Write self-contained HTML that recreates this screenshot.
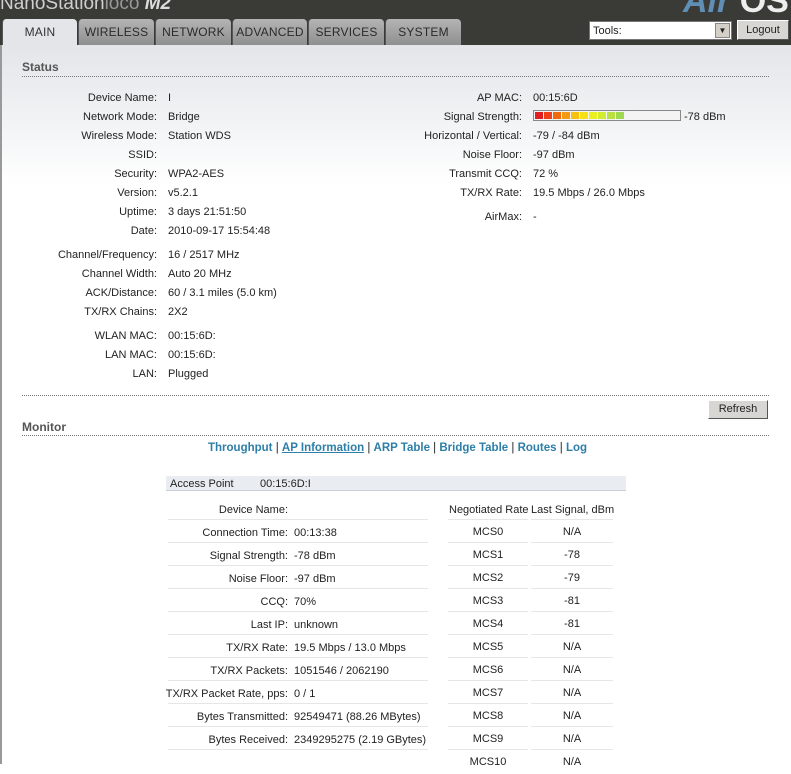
<!DOCTYPE html>
<html><head><meta charset="utf-8"><style>
*{margin:0;padding:0;box-sizing:border-box}
body{width:791px;height:764px;overflow:hidden;position:relative;font-family:"Liberation Sans",Arial,sans-serif;font-size:11px;color:#222;background:#fff}
.hdr{position:absolute;left:0;top:0;width:791px;height:45px;background:#3a3a37}
.main{position:absolute;left:0;top:45px;width:791px;height:719px;background:linear-gradient(#e3e5e9 0px,#eef0f2 60px,#fff 140px,#fff);border-left:2px solid #999}
.tab{position:absolute;top:19px;height:26px;background:linear-gradient(#b4b4b4,#8f8f8f);color:#2a2a2a;font-size:12px;text-align:center;line-height:27px;border-radius:4px 4px 0 0;letter-spacing:.2px;border-left:1px solid #555}
.tab.on{background:#e3e5e9;color:#333}
.a{position:absolute;white-space:nowrap;line-height:14px;margin-top:1px}
.l{text-align:right}
.sec{position:absolute;left:22px;font-weight:bold;font-size:12px;color:#555}
.dot{position:absolute;left:22px;width:747px;border-top:1px dotted #777}
.sep{position:absolute;height:1px;background:#e6e6e6}
.btn{position:absolute;background:#d8d6d2;border:1px solid #fff;border-right-color:#555;border-bottom-color:#555;font-size:11px;text-align:center}
a{color:#2d7ea8;font-weight:bold;text-decoration:none}
</style></head><body>
<div class="hdr"></div>
<div class="a" style="left:0;top:-7px;font-size:19px;color:#cfcfcf;line-height:20px">NanoStation<span style="color:#999">loco</span> <b style="font-style:italic;color:#ddd">M2</b></div>
<div class="a" style="left:683px;top:-15px;font-size:34px;line-height:30px;font-style:italic;color:#5f8fb5;font-weight:bold">Air <span style="color:#eee;font-style:normal">OS</span></div>
<div class="main"></div>
<div class="tab on" style="left:2px;width:75px">MAIN</div>
<div class="tab" style="left:78px;width:76px">WIRELESS</div>
<div class="tab" style="left:155px;width:76px">NETWORK</div>
<div class="tab" style="left:232px;width:75px">ADVANCED</div>
<div class="tab" style="left:308px;width:76px">SERVICES</div>
<div class="tab" style="left:385px;width:76px">SYSTEM</div>
<div style="position:absolute;left:589px;top:21px;width:143px;height:19px;background:#fff;border:1px solid #777"><span class="a" style="left:3px;top:1px">Tools:</span><div style="position:absolute;right:1px;top:1px;width:15px;height:15px;background:#d4d0c8;border:1px solid #888;font-size:8px;text-align:center;line-height:14px">▼</div></div>
<div class="btn" style="left:737px;top:20px;width:52px;height:20px;line-height:18px">Logout</div>

<div class="sec" style="top:60px">Status</div>
<div class="dot" style="top:76px"></div>

<div class="a l" style="left:20px;width:137px;top:90px">Device Name:</div><div class="a" style="left:168px;top:90px">I</div>
<div class="a l" style="left:20px;width:137px;top:109px">Network Mode:</div><div class="a" style="left:168px;top:109px">Bridge</div>
<div class="a l" style="left:20px;width:137px;top:128px">Wireless Mode:</div><div class="a" style="left:168px;top:128px">Station WDS</div>
<div class="a l" style="left:20px;width:137px;top:147px">SSID:</div>
<div class="a l" style="left:20px;width:137px;top:166px">Security:</div><div class="a" style="left:168px;top:166px">WPA2-AES</div>
<div class="a l" style="left:20px;width:137px;top:185px">Version:</div><div class="a" style="left:168px;top:185px">v5.2.1</div>
<div class="a l" style="left:20px;width:137px;top:204px">Uptime:</div><div class="a" style="left:168px;top:204px">3 days 21:51:50</div>
<div class="a l" style="left:20px;width:137px;top:223px">Date:</div><div class="a" style="left:168px;top:223px">2010-09-17 15:54:48</div>
<div class="a l" style="left:20px;width:137px;top:247px">Channel/Frequency:</div><div class="a" style="left:168px;top:247px">16 / 2517 MHz</div>
<div class="a l" style="left:20px;width:137px;top:266px">Channel Width:</div><div class="a" style="left:168px;top:266px">Auto 20 MHz</div>
<div class="a l" style="left:20px;width:137px;top:285px">ACK/Distance:</div><div class="a" style="left:168px;top:285px">60 / 3.1 miles (5.0 km)</div>
<div class="a l" style="left:20px;width:137px;top:304px">TX/RX Chains:</div><div class="a" style="left:168px;top:304px">2X2</div>
<div class="a l" style="left:20px;width:137px;top:328px">WLAN MAC:</div><div class="a" style="left:168px;top:328px">00:15:6D:</div>
<div class="a l" style="left:20px;width:137px;top:347px">LAN MAC:</div><div class="a" style="left:168px;top:347px">00:15:6D:</div>
<div class="a l" style="left:20px;width:137px;top:366px">LAN:</div><div class="a" style="left:168px;top:366px">Plugged</div>

<div class="a l" style="left:380px;width:142px;top:90px">AP MAC:</div><div class="a" style="left:533px;top:90px">00:15:6D</div>
<div class="a l" style="left:380px;width:142px;top:109px">Signal Strength:</div>
<div style="position:absolute;left:533px;top:110px;width:148px;height:11px;border:1px solid #888;background:#f4f4f4;padding:1px;display:flex;gap:1px">
<i style="width:8px;background:#e02020"></i><i style="width:8px;background:#f04018"></i><i style="width:8px;background:#f06a10"></i><i style="width:8px;background:#f59a10"></i><i style="width:8px;background:#f8c010"></i><i style="width:8px;background:#f8e010"></i><i style="width:8px;background:#eaf020"></i><i style="width:8px;background:#d2ec30"></i><i style="width:8px;background:#b8e040"></i><i style="width:8px;background:#a0d850"></i></div>
<div class="a" style="left:684px;top:109px">-78 dBm</div>
<div class="a l" style="left:380px;width:142px;top:128px">Horizontal / Vertical:</div><div class="a" style="left:533px;top:128px">-79 / -84 dBm</div>
<div class="a l" style="left:380px;width:142px;top:147px">Noise Floor:</div><div class="a" style="left:533px;top:147px">-97 dBm</div>
<div class="a l" style="left:380px;width:142px;top:166px">Transmit CCQ:</div><div class="a" style="left:533px;top:166px">72 %</div>
<div class="a l" style="left:380px;width:142px;top:185px">TX/RX Rate:</div><div class="a" style="left:533px;top:185px">19.5 Mbps / 26.0 Mbps</div>
<div class="a l" style="left:380px;width:142px;top:209px">AirMax:</div><div class="a" style="left:533px;top:209px">-</div>

<div class="dot" style="top:395px"></div>
<div class="btn" style="left:708px;top:400px;width:60px;height:19px;line-height:17px">Refresh</div>
<div class="sec" style="top:420px">Monitor</div>
<div class="dot" style="top:435px"></div>
<div class="a" style="left:208px;top:440px;font-size:11.5px"><a>Throughput</a> | <a style="text-decoration:underline">AP Information</a> | <a>ARP Table</a> | <a>Bridge Table</a> | <a>Routes</a> | <a>Log</a></div>

<div style="position:absolute;left:166px;top:476px;width:460px;height:15px;background:#e9ecf1;border-bottom:1px solid #ccd"></div>
<div class="a" style="left:170px;top:476px">Access Point</div><div class="a" style="left:260px;top:476px">00:15:6D:I</div>

<div class="a l" style="left:150px;width:138px;top:502px">Device Name:</div>
<div class="a" style="left:449px;top:502px">Negotiated Rate</div><div class="a" style="left:531px;top:502px">Last Signal, dBm</div>

<div class="a l" style="left:150px;width:138px;top:525px">Connection Time:</div><div class="a" style="left:294px;top:525px">00:13:38</div>
<div class="a l" style="left:150px;width:138px;top:548px">Signal Strength:</div><div class="a" style="left:294px;top:548px">-78 dBm</div>
<div class="a l" style="left:150px;width:138px;top:571px">Noise Floor:</div><div class="a" style="left:294px;top:571px">-97 dBm</div>
<div class="a l" style="left:150px;width:138px;top:594px">CCQ:</div><div class="a" style="left:294px;top:594px">70%</div>
<div class="a l" style="left:150px;width:138px;top:617px">Last IP:</div><div class="a" style="left:294px;top:617px">unknown</div>
<div class="a l" style="left:150px;width:138px;top:640px">TX/RX Rate:</div><div class="a" style="left:294px;top:640px">19.5 Mbps / 13.0 Mbps</div>
<div class="a l" style="left:150px;width:138px;top:663px">TX/RX Packets:</div><div class="a" style="left:294px;top:663px">1051546 / 2062190</div>
<div class="a l" style="left:150px;width:138px;top:686px">TX/RX Packet Rate, pps:</div><div class="a" style="left:294px;top:686px">0 / 1</div>
<div class="a l" style="left:150px;width:138px;top:709px">Bytes Transmitted:</div><div class="a" style="left:294px;top:709px">92549471 (88.26 MBytes)</div>
<div class="a l" style="left:150px;width:138px;top:732px">Bytes Received:</div><div class="a" style="left:294px;top:732px">2349295275 (2.19 GBytes)</div>

<div style="position:absolute;left:448px;top:521px;width:80px;text-align:center;line-height:23px">MCS0<br>MCS1<br>MCS2<br>MCS3<br>MCS4<br>MCS5<br>MCS6<br>MCS7<br>MCS8<br>MCS9<br>MCS10</div>
<div style="position:absolute;left:531px;top:521px;width:82px;text-align:center;line-height:23px">N/A<br>-78<br>-79<br>-81<br>-81<br>N/A<br>N/A<br>N/A<br>N/A<br>N/A<br>N/A</div>

<div class="sep" style="left:168px;width:260px;top:519px"></div><div class="sep" style="left:448px;width:80px;top:519px"></div><div class="sep" style="left:531px;width:82px;top:519px"></div>
<div class="sep" style="left:168px;width:260px;top:542px"></div><div class="sep" style="left:448px;width:80px;top:542px"></div><div class="sep" style="left:531px;width:82px;top:542px"></div>
<div class="sep" style="left:168px;width:260px;top:565px"></div><div class="sep" style="left:448px;width:80px;top:565px"></div><div class="sep" style="left:531px;width:82px;top:565px"></div>
<div class="sep" style="left:168px;width:260px;top:588px"></div><div class="sep" style="left:448px;width:80px;top:588px"></div><div class="sep" style="left:531px;width:82px;top:588px"></div>
<div class="sep" style="left:168px;width:260px;top:611px"></div><div class="sep" style="left:448px;width:80px;top:611px"></div><div class="sep" style="left:531px;width:82px;top:611px"></div>
<div class="sep" style="left:168px;width:260px;top:634px"></div><div class="sep" style="left:448px;width:80px;top:634px"></div><div class="sep" style="left:531px;width:82px;top:634px"></div>
<div class="sep" style="left:168px;width:260px;top:657px"></div><div class="sep" style="left:448px;width:80px;top:657px"></div><div class="sep" style="left:531px;width:82px;top:657px"></div>
<div class="sep" style="left:168px;width:260px;top:680px"></div><div class="sep" style="left:448px;width:80px;top:680px"></div><div class="sep" style="left:531px;width:82px;top:680px"></div>
<div class="sep" style="left:168px;width:260px;top:703px"></div><div class="sep" style="left:448px;width:80px;top:703px"></div><div class="sep" style="left:531px;width:82px;top:703px"></div>
<div class="sep" style="left:168px;width:260px;top:726px"></div><div class="sep" style="left:448px;width:80px;top:726px"></div><div class="sep" style="left:531px;width:82px;top:726px"></div>
<div class="sep" style="left:168px;width:260px;top:749px"></div><div class="sep" style="left:448px;width:80px;top:749px"></div><div class="sep" style="left:531px;width:82px;top:749px"></div>
</body></html>
